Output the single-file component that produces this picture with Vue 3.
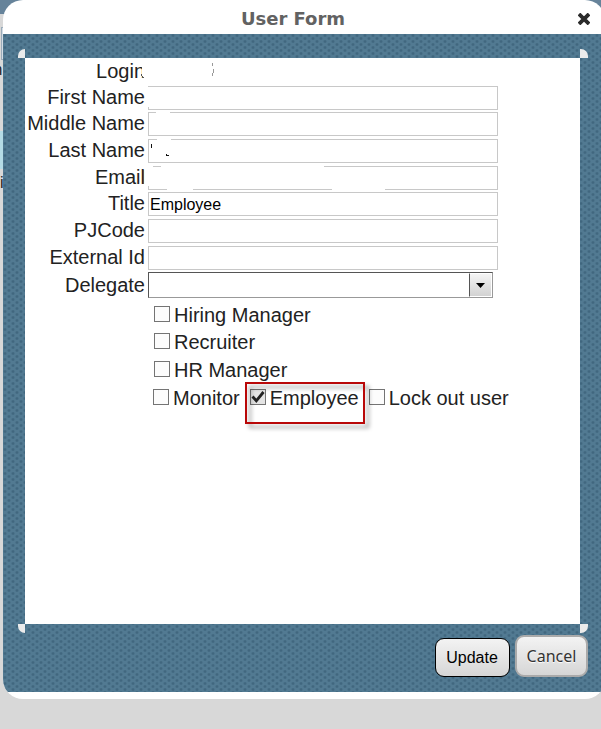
<template>
  <div class="page">
    <!-- strip of the page behind the dialog -->
    <div class="backdrop">
      <div class="backdrop-header"></div>
      <div class="backdrop-side">
        <div class="side-box"></div>
        <div class="side-text">m</div>
        <div class="side-active"></div>
        <div class="side-text side-last">i</div>
      </div>
    </div>

    <div class="dialog">
      <header class="dialog-header">
        <h3 class="dialog-title">User Form</h3>
        <button class="dialog-close" aria-label="Close">
          <svg width="12" height="12" viewBox="0 0 12 12">
            <path d="M2.300 2.300L9.700 9.700M9.700 2.300L2.300 9.700" stroke="#2b2b2b" stroke-width="3.8" stroke-linecap="square" />
          </svg>
        </button>
      </header>

      <div class="dialog-body">
        <div class="panel">
          <i class="corner corner-tl"></i>
          <i class="corner corner-tr"></i>
          <i class="corner corner-bl"></i>
          <i class="corner corner-br"></i>

          <div class="fields">
            <div v-for="field in fields" :key="field.label" class="field" :class="'field-' + field.type">
              <label class="field-label">{{ field.label }}</label>
              <div v-if="field.type === 'text'" class="text-input">{{ field.value }}</div>
              <div v-else-if="field.type === 'select'" class="select">
                <span class="select-value"></span>
                <span class="select-button">
                  <svg width="9" height="5" viewBox="0 0 9 5"><path d="M0 0H9L4.5 5Z" fill="#000" /></svg>
                </span>
              </div>
            </div>
          </div>

          <div class="roles">
            <div v-for="(row, index) in roles" :key="index" class="role-row">
              <label v-for="role in row" :key="role.label" class="role">
                <span class="checkbox" :class="{ checked: role.checked }">
                  <svg v-if="role.checked" width="14" height="14" viewBox="0 0 14 14">
                    <path d="M1.500 6.5L5.3 10.800L12.500 2" fill="none" stroke="#222" stroke-width="2.8" />
                  </svg>
                </span>
                <span>{{ role.label }}</span>
              </label>
            </div>
          </div>

          <!-- private values are masked -->
          <svg class="masks" width="555" height="220" viewBox="25 58 555 220">
            <g fill="#fff">
              <rect x="142" y="62" width="5" height="21" />
              <rect x="148" y="87" width="2" height="20" />
              <rect x="156" y="111" width="14" height="3" />
              <rect x="157" y="138" width="14" height="3" />
              <rect x="148" y="165" width="5" height="21" />
              <rect x="161" y="165" width="163" height="3" />
              <rect x="167" y="188" width="26" height="3" />
              <rect x="332" y="188" width="53" height="3" />
            </g>
            <path d="M141.500 74V76M142.500 76V78M143 77.500H144" stroke="#555" />
            <path d="M212.500 63V66M212.500 73V76M213.500 69V73" stroke="#999" />
            <path d="M151.500 144V148M166 154.500H167M166 155.500H169" stroke="#111" />
            <path d="M143.500 170V184" stroke="#555" />
          </svg>

          <div class="highlight"></div>
        </div>

        <footer class="dialog-footer">
          <button class="btn btn-update">Update</button>
          <button class="btn btn-cancel">Cancel</button>
        </footer>
      </div>
    </div>
  </div>
</template>

<script setup>
const fields = [
  { label: 'Login', type: 'plain' },
  { label: 'First Name', type: 'text', value: '' },
  { label: 'Middle Name', type: 'text', value: '' },
  { label: 'Last Name', type: 'text', value: '' },
  { label: 'Email', type: 'text', value: '' },
  { label: 'Title', type: 'text', value: 'Employee' },
  { label: 'PJCode', type: 'text', value: '' },
  { label: 'External Id', type: 'text', value: '' },
  { label: 'Delegate', type: 'select' }
]

const roles = [
  [{ label: 'Hiring Manager', checked: false }],
  [{ label: 'Recruiter', checked: false }],
  [{ label: 'HR Manager', checked: false }],
  [
    { label: 'Monitor', checked: false },
    { label: 'Employee', checked: true },
    { label: 'Lock out user', checked: false }
  ]
]
</script>

<style>
body {
  overflow: hidden;
}
</style>

<style scoped>
.page {
  position: relative;
  width: 601px;
  height: 729px;
  overflow: hidden;
  background: #d8d8d8;
  font-family: "Liberation Sans", Arial, sans-serif;
  color: #222;
}

* {
  box-sizing: border-box;
}

/* page behind */
.backdrop {
  position: absolute;
  inset: 0;
}

.backdrop-header {
  height: 14px;
  background: #66839a;
}

.backdrop-side {
  width: 40px;
  padding-top: 13px;
}

.side-box {
  height: 33px;
  margin-left: 1px;
  border: 1px solid #9aabb9;
  background: #d3dce4;
}

.side-text {
  height: 71px;
  margin-left: -11px;
  font-size: 16px;
  line-height: 20px;
}

.side-active {
  height: 38px;
  background: #b5dbe5;
}

.side-last {
  margin-left: 0;
  padding-top: 4px;
}

/* dialog */
.dialog {
  position: relative;
  width: 602px;
  height: 699px;
  margin-left: 3px;
  border-radius: 20px;
  background: #fff;
  overflow: hidden;
}

.dialog-header {
  display: flex;
  align-items: center;
  height: 34px;
  padding: 3px 15px 0 0;
}

.dialog-title {
  flex: 1;
  margin: 0;
  padding-left: 5px;
  text-align: center;
  font: bold 18px/22px "DejaVu Sans", Verdana, sans-serif;
  color: #626262;
}

.dialog-close {
  display: flex;
  padding: 0;
  border: none;
  background: none;
}

.dialog-body {
  height: 658px;
  padding: 24px 22px 0;
  background-color: #527a92;
  background-image:
    radial-gradient(circle at 2px 1.500px, #41677f 0.800px, transparent 2px),
    radial-gradient(circle at 6px 4.500px, #41677f 0.800px, transparent 2px);
  background-size: 8px 6px;
}

.panel {
  position: relative;
  width: 555px;
  height: 566px;
  background: #fff;
}

.corner {
  position: absolute;
  width: 7px;
  height: 9px;
  background: #ebebeb;
}

.corner-tl {
  top: -9px;
  left: -7px;
  border-top-left-radius: 7px;
}

.corner-tr {
  top: -9px;
  right: -8px;
  width: 8px;
  border-top-right-radius: 7px;
}

.corner-bl {
  bottom: -9px;
  left: -7px;
  border-bottom-left-radius: 7px;
}

.corner-br {
  bottom: -9px;
  right: -8px;
  width: 8px;
  border-bottom-right-radius: 7px;
}

/* fields */
.fields {
  display: grid;
  grid-template-rows: 28px 26px 27px 27px 26px 27px 27px 26px 27px;
}

.field {
  display: grid;
  grid-template-columns: 120px 350px;
  column-gap: 3px;
  align-items: start;
}

.field-label {
  text-align: right;
  font-size: 20px;
  line-height: 23px;
}

.field-plain .field-label {
  padding-top: 2px;
}

.field-select .field-label {
  padding-top: 2px;
}

.text-input {
  height: 24px;
  padding-left: 1px;
  border: 1px solid #c8c8c8;
  font-size: 16px;
  line-height: 23px;
  color: #000;
}

.select {
  display: flex;
  width: 345px;
  height: 26px;
  border: 1px solid #999;
  border-top-color: #555;
  border-left-color: #555;
}

.select-value {
  flex: 1;
}

.select-button {
  display: flex;
  align-items: center;
  justify-content: center;
  width: 23px;
  border: 1px solid #fff;
  border-left: 1px solid #555;
  background: linear-gradient(#f4f4f4, #d2d2d2);
}

/* roles */
.roles {
  display: grid;
  grid-template-rows: 27px 28px 28px 27px;
  padding: 5px 0 0 129px;
}

.role-row {
  display: flex;
  gap: 10px;
}

.role-row:last-child {
  margin-left: -1px;
}

.role {
  display: flex;
  gap: 4px;
  height: 23px;
  font-size: 20px;
  line-height: 23px;
  white-space: nowrap;
}

.checkbox {
  width: 16px;
  height: 16px;
  margin-top: 2px;
  border: 1px solid #747474;
  background: #fcfcfc;
}

.checkbox svg {
  display: block;
}

.checkbox.checked {
  background: #e4e4e4;
}

.masks {
  position: absolute;
  top: 0;
  left: 0;
}

.highlight {
  position: absolute;
  top: 324px;
  left: 220px;
  width: 120px;
  height: 42px;
  border: 2px solid #b90808;
  filter: drop-shadow(4px 4px 2px rgba(0, 0, 0, 0.4));
}

/* footer */
.dialog-footer {
  display: flex;
  align-items: flex-end;
  justify-content: flex-end;
  gap: 5px;
  height: 53px;
  margin-right: -5px;
}

.btn {
  padding: 0;
  border-radius: 9px;
  background: linear-gradient(#f3f3f3, #d6d6d6);
  font-size: 16px;
}

.btn-update {
  width: 75px;
  height: 39px;
  padding-right: 1px;
  border: 1px solid #000;
  font-family: "Liberation Sans", Arial, sans-serif;
  color: #000;
}

.btn-cancel {
  width: 73px;
  height: 42px;
  border: 2px solid #aaa;
  font-family: "Noto Sans", sans-serif;
  color: #333;
  text-shadow: 0 1px 1px #fff;
}
</style>
